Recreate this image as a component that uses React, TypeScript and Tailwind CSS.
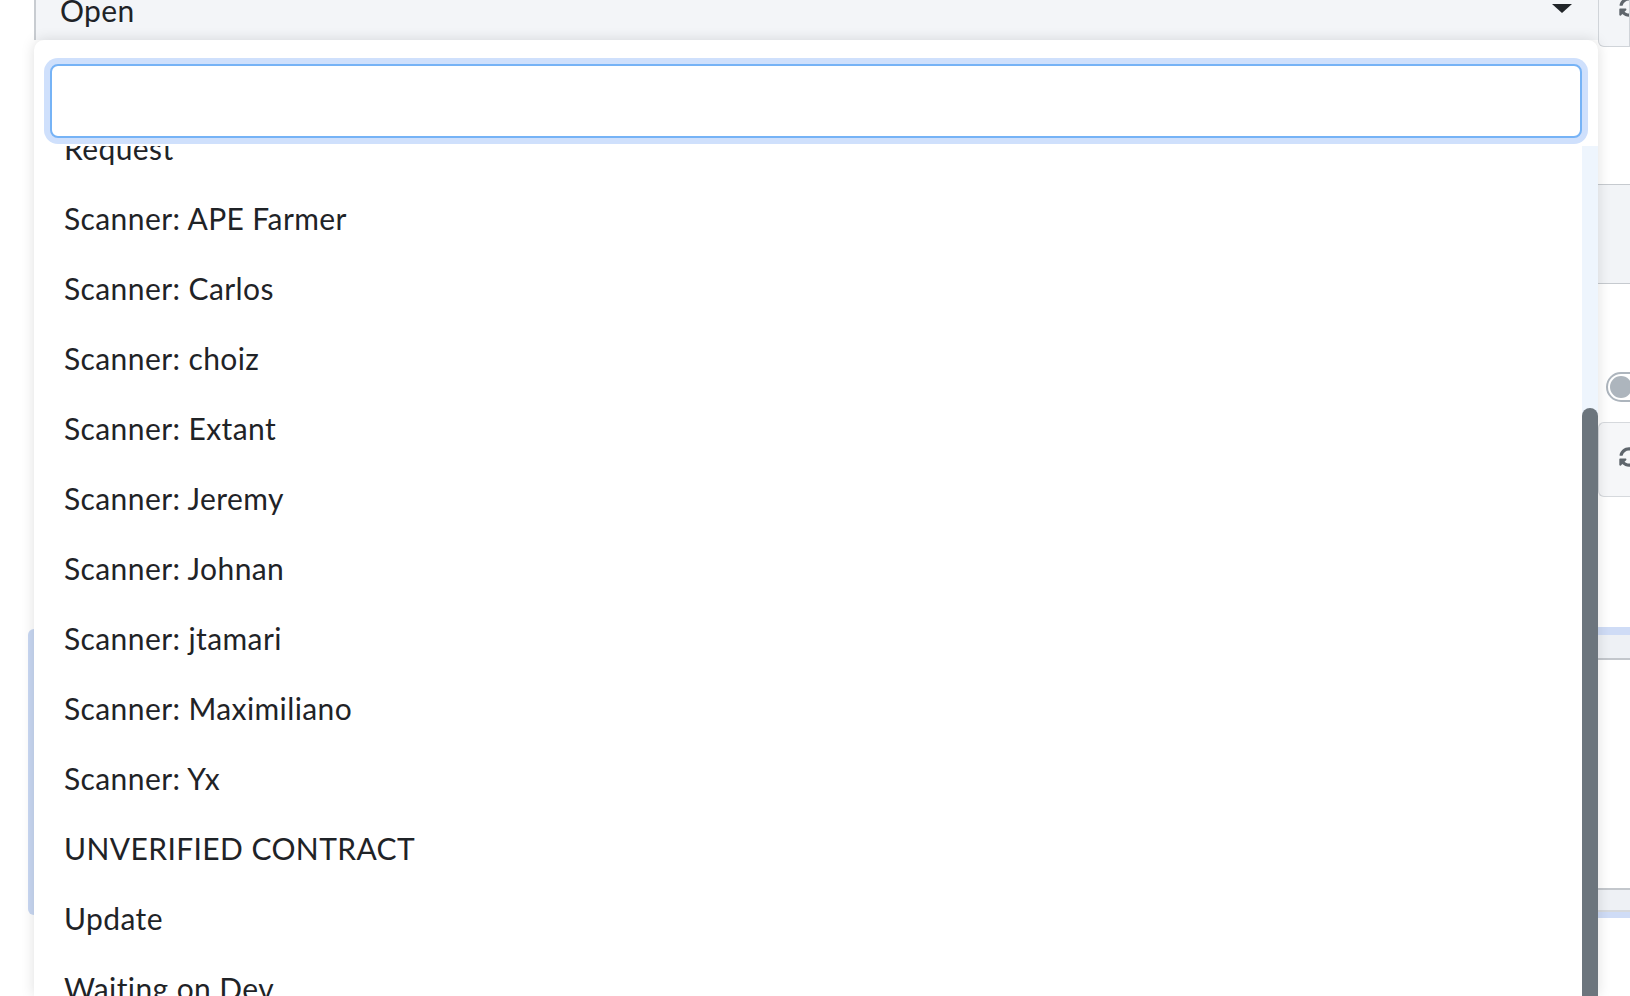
import { FaSyncAlt } from 'react-icons/fa';

const statuses = [
  'Request',
  'Scanner: APE Farmer',
  'Scanner: Carlos',
  'Scanner: choiz',
  'Scanner: Extant',
  'Scanner: Jeremy',
  'Scanner: Johnan',
  'Scanner: jtamari',
  'Scanner: Maximiliano',
  'Scanner: Yx',
  'UNVERIFIED CONTRACT',
  'Update',
  'Waiting on Dev',
];

function SideColumn() {
  return (
    <div className="flex w-[32px] shrink-0 flex-col">
      <div className="h-[47px] overflow-hidden rounded-bl-md border border-t-0 border-[#d0d4d9] bg-[#f3f5f8] pl-[20px]">
        <FaSyncAlt className="-mt-[3px] h-[20px] w-[20px] text-[#5f666d]" />
      </div>
      <div className="mt-[137px] h-[100px] border-y border-[#c6cacf] bg-[#f2f4f7]" />
      <div className="ml-[8px] mt-[88px] flex h-[30px] w-[52px] items-center rounded-full border-2 border-[#adb5bd] bg-white px-[2px]">
        <div className="h-[22px] w-[22px] rounded-full bg-[#adb5bd]" />
      </div>
      <div className="mt-[20px] h-[75px] overflow-hidden rounded-l-md border border-r-0 border-[#d6d9dd] bg-[#f6f7f9] pl-[20px] pt-[24px]">
        <FaSyncAlt className="h-[20px] w-[20px] text-[#5f666d]" />
      </div>
      <div className="mt-[130px] h-[8px] bg-[#cfdcf6]" />
      <div className="h-[25px] border-b-2 border-[#c3c7cc] bg-[#eef1f5]" />
      <div className="mt-[228px] h-[24px] border-y-2 border-t-[#c3c7cc] border-b-[#d6d9dd] bg-[#eef1f5]" />
      <div className="h-[6px] bg-[#cfdcf6]" />
    </div>
  );
}

function StatusDropdown() {
  return (
    <div className="absolute bottom-0 left-[34px] top-[40px] flex w-[1564px] flex-col rounded-t-[10px] bg-white shadow-[0_0_14px_rgba(0,0,0,0.13)]">
      <div className="px-4 pb-2 pt-6">
        <input
          className="h-[74px] w-full rounded-lg border-2 border-[#76b3f6] bg-white px-4 text-[30px] outline-none ring-[6px] ring-[#cfe0fc]"
          defaultValue=""
        />
      </div>
      <div className="flex min-h-0 flex-1">
        <div className="flex-1 overflow-hidden">
          <ul className="-mt-[33px]">
            {statuses.map((s) => (
              <li key={s} className="flex h-[70px] items-center pl-[30px] text-[30px] leading-[36px] tracking-[0.4px] text-[#1f2327]">
                {s}
              </li>
            ))}
          </ul>
        </div>
        <div className="flex w-[16px] flex-col bg-[#eef5fd]">
          <div className="mt-[262px] flex-1 rounded-t-full bg-[#6c757d]" />
        </div>
      </div>
    </div>
  );
}

export default function App() {
  return (
    <div className="relative h-[996px] w-[1630px] overflow-hidden bg-white font-['Lato',sans-serif] text-[#1f2327]">
      <div className="flex h-full">
        <div className="w-[34px] shrink-0 pt-[629px]">
          <div className="ml-[28px] h-[286px] rounded-l-lg bg-[#c9d8f3]" />
        </div>
        <div className="flex-1">
          <div className="flex h-[40px] items-start justify-between border-l-2 border-[#c8ccd1] bg-[#f3f5f8] pl-[24px] pr-[26px]">
            <span className="-mt-[8px] text-[30px] leading-[36px] tracking-[0.4px]">Open</span>
            <svg width="20" height="12" viewBox="0 0 20 12" className="mt-[1px]">
              <path d="M0 3 L20 3 L10 12 Z" fill="#212529" />
            </svg>
          </div>
        </div>
        <SideColumn />
      </div>
      <StatusDropdown />
    </div>
  );
}
